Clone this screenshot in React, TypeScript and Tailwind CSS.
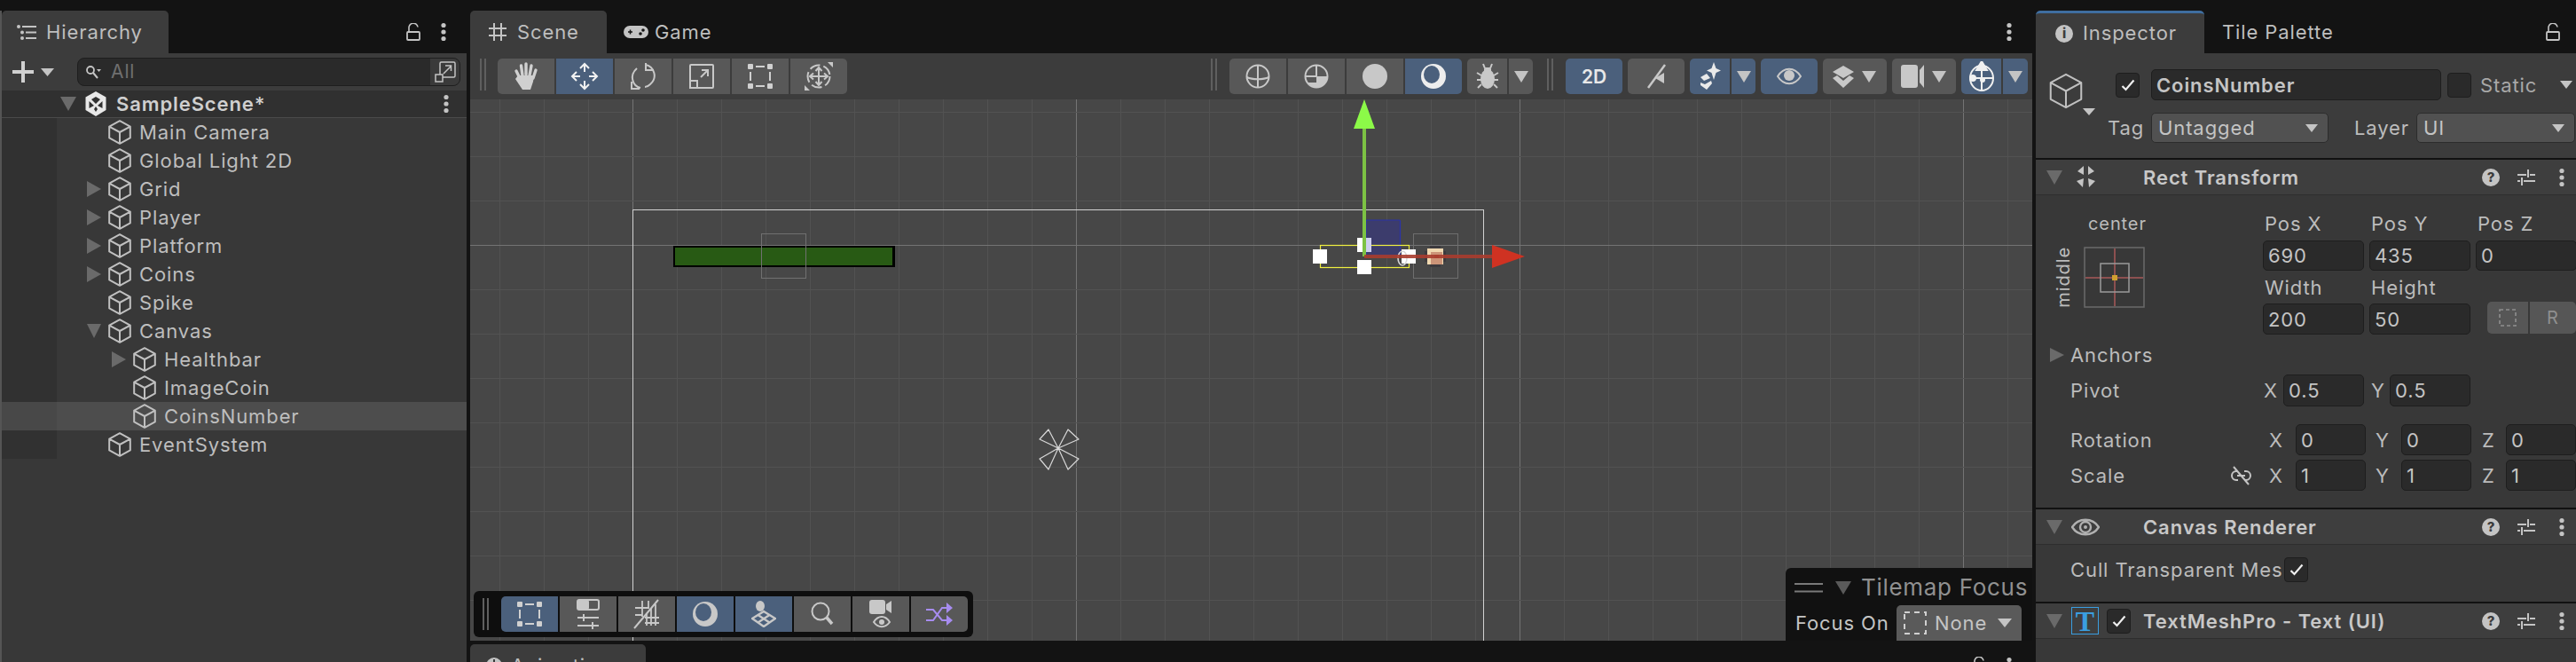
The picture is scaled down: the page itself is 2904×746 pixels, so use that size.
import type { ReactNode } from "react";

function Svg({ w, h, vb, children }: { w: number; h: number; vb?: string; children: ReactNode }) {
  return (
    <svg width={w} height={h} viewBox={vb ?? `0 0 ${w} ${h}`} fill="none" className="shrink-0">
      {children}
    </svg>
  );
}

function Cube({ w = 26, h = 28 }: { w?: number; h?: number }) {
  return (
    <Svg w={w} h={h} vb="0 0 26 28">
      <path d="M13 1.2 24.8 7.6V20.4L13 26.8 1.2 20.4V7.6Z M1.2 7.6 13 14 24.8 7.6 M13 14V26.8" stroke="#c0c0c0" strokeWidth={w > 30 ? 1.4 : 2} strokeLinejoin="round" />
    </Svg>
  );
}

function Tri({ w = 16, h = 16, dir = "right", color = "#6a6a6a" }: { w?: number; h?: number; dir?: "right" | "down"; color?: string }) {
  const pts = dir === "right" ? `0,0 ${w},${h / 2} 0,${h}` : `0,0 ${w},0 ${w / 2},${h}`;
  return (
    <Svg w={w} h={h}>
      <polygon points={pts} fill={color} />
    </Svg>
  );
}

function Caret({ w = 14, h = 8 }: { w?: number; h?: number }) {
  return <Tri w={w} h={h} dir="down" color="#c4c4c4" />;
}

function Kebab() {
  return (
    <Svg w={6} h={22}>
      <circle cx="3" cy="3.5" r="2.6" fill="#c4c4c4" />
      <circle cx="3" cy="11" r="2.6" fill="#c4c4c4" />
      <circle cx="3" cy="18.5" r="2.6" fill="#c4c4c4" />
    </Svg>
  );
}

function Lock() {
  return (
    <Svg w={16} h={20}>
      <path d="M3 9V6a5 5 0 0 1 10-1.5" stroke="#c4c4c4" strokeWidth="1.6" />
      <rect x="1" y="10" width="14" height="9" rx="1" stroke="#c4c4c4" strokeWidth="1.8" />
    </Svg>
  );
}

function CheckBox({ checked = true }: { checked?: boolean }) {
  return (
    <div className="w-[27px] h-[28px] shrink-0 rounded-[4px] bg-[#2a2a2a] border border-[#1e1e1e] flex items-center justify-center">
      {checked && (
        <Svg w={16} h={14}>
          <path d="M1.5 8 5.5 12 14.5 1.5" stroke="#efefef" strokeWidth="2.2" />
        </Svg>
      )}
    </div>
  );
}

function HeaderTools() {
  return (
    <div className="ml-auto mr-[13px] flex items-center">
      <div className="w-[20px] h-[20px] rounded-full bg-[#c4c4c4] flex items-center justify-center text-[15px] font-extrabold text-[#3c3c3c] leading-none tracking-normal">?</div>
      <div className="ml-[20px]">
        <Svg w={20} h={20}>
          <path d="M0 7H10 M14 7H20 M12 1V10 M0 14H3 M7 14H20 M5 10V19" stroke="#c4c4c4" strokeWidth="2" />
        </Svg>
      </div>
      <div className="ml-[27px]">
        <Kebab />
      </div>
    </div>
  );
}

function ComponentHeader({ children, title }: { children: ReactNode; title: string }) {
  return (
    <div className="h-[40px] shrink-0 bg-[#3e3e3e] border-b border-[#2e2e2e] flex items-center pl-[12px]">
      <Tri w={18} h={16} dir="down" />
      <div className="w-[91px] shrink-0 flex items-center">{children}</div>
      <span className="text-[22px] font-semibold text-[#c8c8c8] whitespace-nowrap leading-none">{title}</span>
      <HeaderTools />
    </div>
  );
}

function Field({ value, w, h = "h-[35px]", bold }: { value: string; w: string; h?: string; bold?: boolean }) {
  return (
    <div className={`${w} ${h} shrink-0 rounded-[5px] bg-[#2a2a2a] border border-[#1e1e1e] flex items-center pl-[5px] text-[22px] text-[#c4c4c4] leading-none ${bold ? "font-semibold" : ""}`}>
      {value}
    </div>
  );
}

function Label({ children, w }: { children: ReactNode; w: string }) {
  return <span className={`${w} shrink-0 text-[22px] text-[#bcbcbc] whitespace-nowrap leading-none`}>{children}</span>;
}

function Dropdown({ value, w }: { value: string; w: string }) {
  return (
    <div className={`${w} h-[34px] shrink-0 rounded-[5px] bg-[#515151] border border-[#2c2c2c] flex items-center justify-between pl-[7px] pr-[11px] text-[22px] text-[#c4c4c4] leading-none`}>
      <span>{value}</span>
      <Caret w={14} h={9} />
    </div>
  );
}

function TreeRow({ name, depth, arrow, selected }: { name: string; depth: number; arrow?: "right" | "down"; selected?: boolean }) {
  return (
    <div className={`h-[32px] flex items-center ${selected ? "bg-[#4d4d4d]" : ""}`}>
      <div className={`w-[62px] h-full shrink-0 ${selected ? "bg-[#484848]" : "bg-[#313131]"}`} />
      <div className={`flex items-center ${depth === 1 ? "pl-[34px]" : "pl-[62px]"}`}>
        <div className="w-[24px] flex items-center">{arrow && <Tri w={16} h={arrow === "right" ? 18 : 16} dir={arrow} />}</div>
        <Cube />
        <span className="ml-[9px] text-[22px] text-[#bebebe] whitespace-nowrap leading-none">{name}</span>
      </div>
    </div>
  );
}

function Hierarchy() {
  return (
    <div className="w-[524px] shrink-0 flex flex-col pt-[12px]">
      <div className="h-[48px] flex items-center justify-between shrink-0">
        <div className="w-[188px] h-full bg-[#3c3c3c] rounded-t-[5px] flex items-center pl-[17px]">
          <Svg w={22} h={17}>
            <circle cx="2" cy="2" r="2" fill="#c4c4c4" />
            <circle cx="6" cy="8.5" r="2" fill="#c4c4c4" />
            <circle cx="6" cy="15" r="2" fill="#c4c4c4" />
            <path d="M6 2H22 M10 8.5H22 M10 15H22" stroke="#c4c4c4" strokeWidth="2" />
          </Svg>
          <span className="ml-[11px] text-[22px] text-[#bebebe]">Hierarchy</span>
        </div>
        <div className="flex items-center pr-[23px]">
          <Lock />
          <div className="ml-[23px]">
            <Kebab />
          </div>
        </div>
      </div>
      <div className="h-[42px] shrink-0 bg-[#3c3c3c] flex items-center pl-[12px]">
        <Svg w={24} h={24}>
          <path d="M12 0V24 M0 12H24" stroke="#d0d0d0" strokeWidth="4" />
        </Svg>
        <div className="ml-[8px]">
          <Caret w={15} h={9} />
        </div>
        <div className="ml-[26px] w-[432px] h-[32px] rounded-[8px] bg-[#2a2a2a] border border-[#1e1e1e] flex items-center pl-[8px] overflow-hidden">
          <Svg w={18} h={18}>
            <circle cx="6" cy="7" r="4" stroke="#c4c4c4" strokeWidth="1.8" />
            <path d="M9 10 14 16" stroke="#c4c4c4" strokeWidth="2" />
            <path d="M13 6H18L15.5 9Z" fill="#c4c4c4" />
          </Svg>
          <span className="ml-[11px] text-[21px] text-[#6f6f6f] flex-1">All</span>
          <div className="w-[33px] h-full bg-[#3a3a3a] flex items-center justify-center">
            <Svg w={24} h={24}>
              <rect x="6" y="1" width="17" height="17" rx="1.5" stroke="#c4c4c4" strokeWidth="1.5" />
              <rect x="1" y="15" width="8" height="8" fill="#3a3a3a" stroke="#c4c4c4" strokeWidth="1.5" />
              <path d="M10 14 18 6 M12 5H18.5V11" stroke="#c4c4c4" strokeWidth="1.5" />
            </Svg>
          </div>
        </div>
      </div>
      <div className="h-[31px] shrink-0 bg-[#303030] border-b border-[#4a4a4a] flex items-center">
        <div className="ml-[66px]">
          <Tri w={18} h={16} dir="down" />
        </div>
        <div className="ml-[10px]">
          <Svg w={24} h={28}>
            <path d="M12 0 23.5 6.5V21L12 28 .5 21V6.5Z" fill="#e8e8e8" />
            <path d="M12 6 7 9 12 14 17 9Z M4.5 11V19L10 16Z M19.5 11V19L14 16Z M12 17 10 20 12 23 14 20Z" fill="#303030" />
          </Svg>
        </div>
        <span className="ml-[11px] text-[22px] font-semibold text-[#cfcfcf] flex-1 leading-none">SampleScene*</span>
        <div className="mr-[20px]">
          <Kebab />
        </div>
      </div>
      <div className="flex-1 bg-[#383838] flex flex-col">
        <TreeRow name="Main Camera" depth={1} />
        <TreeRow name="Global Light 2D" depth={1} />
        <TreeRow name="Grid" depth={1} arrow="right" />
        <TreeRow name="Player" depth={1} arrow="right" />
        <TreeRow name="Platform" depth={1} arrow="right" />
        <TreeRow name="Coins" depth={1} arrow="right" />
        <TreeRow name="Spike" depth={1} />
        <TreeRow name="Canvas" depth={1} arrow="down" />
        <TreeRow name="Healthbar" depth={2} arrow="right" />
        <TreeRow name="ImageCoin" depth={2} />
        <TreeRow name="CoinsNumber" depth={2} selected />
        <TreeRow name="EventSystem" depth={1} />
      </div>
    </div>
  );
}

function Handle({ className }: { className?: string }) {
  return (
    <div className={`flex gap-[3px] h-[36px] ${className ?? ""}`}>
      <div className="w-[2px] h-full bg-[#5f5f5f]" />
      <div className="w-[2px] h-full bg-[#5f5f5f]" />
    </div>
  );
}

function Btn({ children, w, active, round }: { children?: ReactNode; w: string; active?: boolean; round?: string }) {
  return <div className={`${w} h-[40px] shrink-0 flex items-center justify-center ${active ? "bg-[#4b607c]" : "bg-[#585858]"} ${round ?? ""}`}>{children}</div>;
}

const s = { stroke: "#c8c8c8", strokeWidth: 2 };

function RectIcon() {
  return (
    <Svg w={28} h={28}>
      <rect x="0" y="0" width="6" height="6" rx="1" fill="#d0d0d0" />
      <rect x="22" y="0" width="6" height="6" rx="1" fill="#d0d0d0" />
      <rect x="0" y="22" width="6" height="6" rx="1" fill="#d0d0d0" />
      <rect x="22" y="22" width="6" height="6" rx="1" fill="#d0d0d0" />
      <path d="M9 3H19 M9 25H19 M3 9V19 M25 9V19" stroke="#d0d0d0" strokeWidth="2" />
    </Svg>
  );
}

function MainToolbar() {
  return (
    <div className="h-[52px] shrink-0 bg-[#3c3c3c] flex items-start pt-[6px]">
      <Handle className="ml-[11px] mr-[13px]" />
      <div className="flex gap-[2px]">
        <Btn w="w-[64px]" round="rounded-l-[5px]">
          <Svg w={30} h={32}>
            <path d="M8 18 4 10 M11 15 9.5 4 M15 14V2 M19 15 21 4 M23 18 26 9" stroke="#d0d0d0" strokeWidth="3.4" strokeLinecap="round" />
            <path d="M6 15H24L23 22 20 31H11L3 19Z" fill="#d0d0d0" />
          </Svg>
        </Btn>
        <Btn w="w-[64px]" active>
          <Svg w={32} h={32}>
            <path d="M16 2V11 M16 21V30 M2 16H11 M21 16H30 M11 7 16 2 21 7 M11 25 16 30 21 25 M7 11 2 16 7 21 M25 11 30 16 25 21" stroke="#f2f2f2" strokeWidth="2" />
          </Svg>
        </Btn>
        <Btn w="w-[64px]">
          <Svg w={30} h={32}>
            <path d="M12 29C3 27-1 15 8 7" {...s} />
            <path d="M18 3C27 5 32 17 23 25 21 27 19 28 17 28" {...s} />
            <path d="M2 22V30H11 M18 1V9H27" {...s} />
          </Svg>
        </Btn>
        <Btn w="w-[64px]">
          <Svg w={28} h={28}>
            <rect x="1" y="1" width="26" height="26" rx="1" {...s} />
            <rect x="1" y="19" width="8" height="8" {...s} />
            <path d="M13 15 21 7 M14 7H21V14" {...s} />
          </Svg>
        </Btn>
        <Btn w="w-[64px]"><RectIcon /></Btn>
        <Btn w="w-[64px]" round="rounded-r-[5px]">
          <Svg w={32} h={32}>
            <circle cx="16" cy="16" r="12.5" stroke="#c8c8c8" strokeWidth="2" strokeDasharray="12 4" />
            <path d="M16 6V26 M6 16H26 M12.5 10 16 6 19.5 10 M12.5 22 16 26 19.5 22 M10 12.5 6 16 10 19.5 M22 12.5 26 16 22 19.5" {...s} />
            <path d="M26 0H32V6Z M0 32V26L6 32Z" fill="#c8c8c8" />
          </Svg>
        </Btn>
      </div>

      <Handle className="ml-[410px] mr-[14px]" />
      <div className="flex gap-[2px]">
        <Btn w="w-[64px]" round="rounded-l-[5px]">
          <Svg w={28} h={28}>
            <circle cx="14" cy="14" r="12.5" {...s} />
            <path d="M14 1.5V26.5 M1.5 15C8 18 20 18 26.5 15" {...s} />
          </Svg>
        </Btn>
        <Btn w="w-[64px]">
          <Svg w={28} h={28}>
            <circle cx="14" cy="14" r="12.5" {...s} />
            <path d="M1.5 14H14V1.5" {...s} />
            <path d="M14 14H26.5C26.5 21 21 26.5 14 26.5 10 26.5 6.5 25 4 21L14 21Z" fill="#c8c8c8" />
          </Svg>
        </Btn>
        <Btn w="w-[64px]">
          <div className="w-[28px] h-[28px] rounded-full bg-[#c8c8c8]" />
        </Btn>
        <Btn w="w-[64px]" active round="rounded-r-[5px]">
          <Svg w={28} h={28}>
            <circle cx="14" cy="14" r="14" fill="#ededed" />
            <ellipse cx="12" cy="12" rx="9" ry="10" fill="#4b607c" />
          </Svg>
        </Btn>
      </div>
      <div className="ml-[6px] flex gap-[2px]">
        <Btn w="w-[45px]" round="rounded-l-[5px]">
          <Svg w={26} h={30}>
            <ellipse cx="13" cy="18" rx="8" ry="11" fill="#c8c8c8" />
            <path d="M8 1 10 6 M18 1 16 6 M1 11 6 14 M25 11 20 14 M1 19H6 M25 19H20 M2 28 6 24 M24 28 20 24" stroke="#c8c8c8" strokeWidth="2" />
            <rect x="9" y="5" width="8" height="6" rx="2" fill="#c8c8c8" />
          </Svg>
        </Btn>
        <Btn w="w-[27px]" round="rounded-r-[5px]"><Caret w={16} h={13} /></Btn>
      </div>

      <Handle className="ml-[16px] mr-[14px]" />
      <Btn w="w-[64px]" active round="rounded-[5px]">
        <span className="text-[21px] font-semibold text-[#e8e8e8] leading-none tracking-normal">2D</span>
      </Btn>
      <Btn w="w-[64px] ml-[6px]" round="rounded-[5px]">
        <Svg w={22} h={28}>
          <path d="M21 1 2 27" stroke="#c8c8c8" strokeWidth="2.5" />
          <path d="M20 10V22L10 16Z" fill="#c8c8c8" />
        </Svg>
      </Btn>
      <div className="ml-[6px] flex gap-[2px]">
        <Btn w="w-[45px]" active round="rounded-l-[5px]">
          <Svg w={24} h={32}>
            <path d="M16 0 18.5 7 24 9.500 18.5 12 16 20 13.5 12 8 9.500 13.5 7Z" fill="#eaeaea" />
            <path d="M1 17 8 13 12 18 5 21Z M1 23 6 25 13 21 14 24 8 31 1 26Z" fill="#eaeaea" />
          </Svg>
        </Btn>
        <Btn w="w-[27px]" active round="rounded-r-[5px]"><Caret w={16} h={13} /></Btn>
      </div>
      <Btn w="w-[64px] ml-[6px]" active round="rounded-[5px]">
        <Svg w={28} h={24}>
          <path d="M1 12C8 1 20 1 27 12 20 23 8 23 1 12Z" stroke="#c8c8c8" strokeWidth="2" />
          <circle cx="14" cy="11" r="6" fill="#c8c8c8" />
        </Svg>
      </Btn>
      <div className="ml-[6px] w-[72px] h-[40px] rounded-[5px] bg-[#585858] flex items-center pl-[11px] gap-[9px]">
        <Svg w={24} h={28}>
          <path d="M12 2 24 9 12 16 0 9Z" fill="#c8c8c8" />
          <path d="M0 16 5 13 12 19 19 13 24 16 12 27Z" fill="#c8c8c8" />
        </Svg>
        <Caret w={16} h={13} />
      </div>
      <div className="ml-[6px] w-[72px] h-[40px] rounded-[5px] bg-[#585858] flex items-center pl-[10px] gap-[9px]">
        <Svg w={26} h={28}>
          <rect x="0" y="1" width="19" height="26" rx="3" fill="#c8c8c8" />
          <path d="M21 7 26 1V27L21 21Z" fill="#c8c8c8" />
        </Svg>
        <Caret w={16} h={13} />
      </div>
      <div className="ml-[6px] flex gap-[2px]">
        <Btn w="w-[45px]" active round="rounded-l-[5px]">
          <Svg w={30} h={34}>
            <ellipse cx="15" cy="19" rx="13" ry="14" stroke="#f0f0f0" strokeWidth="2" />
            <path d="M15 0 21 10H9Z M2 19H28 M15 5V33" stroke="#f0f0f0" strokeWidth="2" fill="#f0f0f0" />
            <circle cx="5" cy="19" r="4" fill="#f0f0f0" />
            <circle cx="16" cy="21" r="3" fill="#f0f0f0" />
          </Svg>
        </Btn>
        <Btn w="w-[28px]" active round="rounded-r-[5px]"><Caret w={16} h={13} /></Btn>
      </div>
    </div>
  );
}

function SceneDrawing() {
  const vertical = Array.from({ length: 35 }, (_, i) => 563 + i * 50);
  const horizontal = Array.from({ length: 12 }, (_, i) => 126 + i * 50);
  return (
    <svg className="absolute inset-0" width={1761} height={610} viewBox="530 112 1761 610" fill="none">
      <g shapeRendering="crispEdges">
        {vertical.map((x) => (
          <line key={x} x1={x + 0.5} y1={112} x2={x + 0.5} y2={722} stroke={(x - 213) % 500 === 0 ? "#747474" : "#525252"} />
        ))}
        {horizontal.map((y) => (
          <line key={y} x1={530} y1={y + 0.5} x2={2291} y2={y + 0.5} stroke={y === 276 ? "#747474" : "#525252"} />
        ))}
        <rect x="713.5" y="236.5" width="959" height="600" stroke="#d2d2d2" />

        <rect x="759" y="277" width="250" height="24" fill="#000" />
        <rect x="761" y="279" width="245" height="20" fill="#285a14" />
        <rect x="858.5" y="263.5" width="50" height="50" stroke="#707070" />
        <rect x="1593.5" y="263.5" width="50" height="50" stroke="#6e6e6e" />
      </g>

      <path d="M1193 505 1182 484 1172 495Z M1193 505 1204 484 1216 495Z M1193 505 1172 517 1182 529Z M1193 505 1216 517 1204 529Z" stroke="#d8d8d8" strokeWidth="1.2" strokeLinejoin="round" />

      <rect x="1540" y="248" width="38.5" height="40" rx="1" fill="#3c3c6c" stroke="#2b33a8" strokeWidth="1.2" />
      <rect x="1488.5" y="276.5" width="100" height="25" stroke="#f0f040" strokeWidth="1.2" />
      <rect x="1530" y="268" width="16" height="16" fill="#ffffff" />
      <rect x="1540" y="268" width="6" height="16" fill="#cfd0f0" />
      <rect x="1480" y="281" width="16" height="16" fill="#ffffff" />
      <rect x="1530" y="293" width="16" height="16" fill="#ffffff" />
      <rect x="1580" y="281" width="16" height="16" fill="#ffffff" />
      <ellipse cx="1581" cy="291" rx="5" ry="8" stroke="#d8d8d8" strokeWidth="1.6" />

      <g shapeRendering="crispEdges">
        <rect x="1610" y="281" width="16" height="16" fill="#3c3a3e" />
        <rect x="1612" y="277" width="12" height="24" fill="#3c3a3e" />
        <rect x="1606" y="283" width="24" height="12" fill="#3c3a3e" />
        <rect x="1609" y="280" width="18" height="18" fill="#f0d8b0" />
        <rect x="1613" y="284" width="13" height="14" fill="#cc9478" />
        <rect x="1617" y="287" width="5" height="4" fill="#a8644c" />
      </g>

      <rect x="1536" y="145" width="4" height="144" fill="#7dc244" />
      <polygon points="1538,112 1550,145 1526,145" fill="#8cfa48" />
      <rect x="1538" y="287" width="146" height="4" fill="#a83c2e" fillOpacity="0.9" />
      <polygon points="1682,276 1719,289 1682,302" fill="#cf3222" />
    </svg>
  );
}

function OverlayToolbar() {
  return (
    <div className="absolute left-[4px] top-[554px] w-[563px] h-[52px] bg-[#0e0e0e] rounded-[6px] flex items-center pl-[10px]">
      <Handle className="mr-[14px]" />
      <div className="flex gap-[2px]">
        <Btn w="w-[64px]" active round="rounded-l-[5px]"><RectIcon /></Btn>
        <Btn w="w-[64px]">
          <Svg w={26} h={34}>
            <rect x="1" y="1" width="24" height="11" rx="2" stroke="#c8c8c8" strokeWidth="2" />
            <rect x="1" y="1" width="13" height="11" rx="2" fill="#c8c8c8" />
            <path d="M1 21H25 M1 30H25 M8 17V25 M18 26V34" stroke="#c8c8c8" strokeWidth="2" />
          </Svg>
        </Btn>
        <Btn w="w-[64px]">
          <Svg w={30} h={34}>
            <path d="M1 33 28 1" stroke="#c8c8c8" strokeWidth="2" />
            <path d="M2 10H18 M2 18H10 M10 2V20 M17 2V10 M15 17V30 M20 11V30 M25 6V30 M13 21H29 M13 27H29" stroke="#c8c8c8" strokeWidth="1.8" />
          </Svg>
        </Btn>
        <Btn w="w-[64px]" active>
          <Svg w={28} h={28}>
            <circle cx="14" cy="14" r="14" fill="#c8c8c8" />
            <ellipse cx="12" cy="12" rx="9" ry="10" fill="#4b607c" />
          </Svg>
        </Btn>
        <Btn w="w-[64px]" active>
          <Svg w={28} h={30}>
            <ellipse cx="10" cy="6" rx="5" ry="6" fill="#c8c8c8" />
            <path d="M14 12 27 20 14 29 1 20Z M7.5 16 20.5 24.5 M20.5 16 7.5 24.5" stroke="#c8c8c8" strokeWidth="2.4" />
          </Svg>
        </Btn>
        <Btn w="w-[64px]">
          <Svg w={26} h={28}>
            <circle cx="11" cy="11" r="9.5" stroke="#c8c8c8" strokeWidth="2" />
            <path d="M18 18 24 25" stroke="#c8c8c8" strokeWidth="3.5" />
          </Svg>
        </Btn>
        <Btn w="w-[64px]">
          <Svg w={26} h={32}>
            <rect x="0" y="0" width="18" height="16" rx="3" fill="#c8c8c8" />
            <path d="M19 5 25 1V15L19 11Z" fill="#c8c8c8" />
            <path d="M5 25C10 17 18 17 23 25 18 32 10 32 5 25Z" stroke="#c8c8c8" strokeWidth="2" />
            <circle cx="14" cy="25" r="3" fill="#c8c8c8" />
          </Svg>
        </Btn>
        <Btn w="w-[64px]" round="rounded-r-[5px]">
          <Svg w={30} h={26}>
            <path d="M0 8H8L18 20H25 M0 20H8L18 6H25" stroke="#a78cf0" strokeWidth="2" />
            <path d="M23 0 30 6 23 12Z M23 14 30 20 23 26Z" fill="#a78cf0" />
          </Svg>
        </Btn>
      </div>
    </div>
  );
}

function TilemapFocus() {
  return (
    <div className="absolute right-0 bottom-0 w-[278px] h-[82px] bg-[#111111] rounded-tl-[6px] pl-[10px] overflow-hidden">
      <div className="h-[42px] flex items-center pt-[2px]">
        <Svg w={32} h={11}>
          <path d="M0 1H32 M0 9.5H32" stroke="#7a7a7a" strokeWidth="2" />
        </Svg>
        <div className="ml-[14px]">
          <Tri w={18} h={15} dir="down" color="#5a5a5a" />
        </div>
        <span className="ml-[11px] text-[26px] text-[#909090] whitespace-nowrap leading-none tracking-[0.7px]">Tilemap Focus</span>
      </div>
      <div className="flex items-center">
        <span className="w-[114px] ml-[1px] text-[22px] text-[#c4c4c4] whitespace-nowrap">Focus On</span>
        <div className="w-[141px] h-[40px] bg-[#5a5a5a] rounded-t-[5px] flex items-center pl-[8px]">
          <Svg w={26} h={26}>
            <rect x="1" y="1" width="24" height="24" stroke="#d0d0d0" strokeWidth="2" strokeDasharray="6 5" />
          </Svg>
          <span className="ml-[9px] text-[22px] text-[#c4c4c4] leading-none">None</span>
          <div className="ml-[12px]">
            <Caret w={16} h={10} />
          </div>
        </div>
      </div>
    </div>
  );
}

function ScenePanel() {
  return (
    <div className="w-[1761px] ml-[4px] shrink-0 flex flex-col pt-[12px]">
      <div className="h-[48px] shrink-0 flex items-center">
        <div className="w-[154px] h-full bg-[#3c3c3c] rounded-t-[5px] flex items-center pl-[20px]">
          <Svg w={22} h={22}>
            <path d="M7 1V21 M15 1V21 M1 7H21 M1 15H21" stroke="#c4c4c4" strokeWidth="2" />
          </Svg>
          <span className="ml-[11px] text-[22px] text-[#bebebe]">Scene</span>
        </div>
        <div className="ml-[19px] flex items-center">
          <Svg w={28} h={14}>
            <rect x="0" y="0" width="28" height="14" rx="7" fill="#c4c4c4" />
            <path d="M5 7H10 M7.5 4.5V9.5" stroke="#131313" strokeWidth="1.5" />
            <circle cx="19" cy="9" r="1.8" fill="#131313" />
            <circle cx="22" cy="5" r="1.8" fill="#131313" />
          </Svg>
          <span className="ml-[7px] text-[22px] text-[#bebebe]">Game</span>
        </div>
        <div className="ml-auto mr-[23px]">
          <Kebab />
        </div>
      </div>
      <MainToolbar />
      <div className="relative w-[1761px] h-[610px] shrink-0 bg-[#474747] overflow-hidden">
        <SceneDrawing />
        <OverlayToolbar />
        <TilemapFocus />
      </div>
      <div className="flex-1 pt-[4px] flex items-start overflow-hidden">
        <div className="w-[198px] h-[48px] bg-[#3c3c3c] rounded-t-[5px] flex items-center pl-[18px] shrink-0">
          <Svg w={18} h={18}>
            <circle cx="9" cy="9" r="9" fill="#c4c4c4" />
            <path d="M9 2V9" stroke="#3c3c3c" strokeWidth="2" />
          </Svg>
          <span className="ml-[10px] text-[22px] text-[#bebebe]">Animation</span>
        </div>
        <div className="ml-auto mr-[23px] mt-[14px] flex items-start">
          <Lock />
          <div className="ml-[23px]">
            <Kebab />
          </div>
        </div>
      </div>
    </div>
  );
}

function AxisRow({ label, link, x, y, z, mt }: { label: string; link?: boolean; x: string; y: string; z: string; mt: string }) {
  return (
    <div className={`h-[35px] ${mt} flex items-center pl-[39px]`}>
      <Label w="w-[181px]">{label}</Label>
      <div className="w-[43px] shrink-0">
        {link && (
          <Svg w={23} h={22}>
            <path d="M8 6H6a5 5 0 0 0 0 10h2 M15 6h2a5 5 0 0 1 0 10h-2 M7 11H16" stroke="#c4c4c4" strokeWidth="2" />
            <path d="M3 1 20 21" stroke="#c4c4c4" strokeWidth="2" />
          </Svg>
        )}
      </div>
      <Label w="w-[30px]">X</Label>
      <Field value={x} w="w-[79px]" />
      <Label w="w-[29px] ml-[11px]">Y</Label>
      <Field value={y} w="w-[79px]" />
      <Label w="w-[27px] ml-[12px]">Z</Label>
      <Field value={z} w="w-[79px]" />
    </div>
  );
}

function RectTransform() {
  return (
    <div className="h-[354px] shrink-0 flex flex-col border-b-2 border-[#111111]">
      <div className="flex">
        <div className="w-[256px] shrink-0 pt-[20px]">
          <div className="h-[24px] pl-[59px] flex items-center text-[20px] text-[#bcbcbc] leading-none">center</div>
          <div className="mt-[14px] flex items-center pl-[21px]">
            <span className="w-[16px] text-[20px] text-[#bcbcbc] leading-none [writing-mode:vertical-rl] rotate-180">middle</span>
            <div className="ml-[17px]">
              <Svg w={69} h={69}>
                <rect x="1" y="1" width="67" height="67" stroke="#6a6a6a" strokeWidth="1.5" />
                <path d="M2 35H67 M35 2V67" stroke="#a85858" strokeWidth="1.5" />
                <rect x="19" y="19" width="32" height="32" stroke="#9a9a9a" strokeWidth="1.5" />
                <rect x="32" y="32" width="6" height="6" fill="#d0a030" />
              </Svg>
            </div>
          </div>
        </div>
        <div className="flex-1 pt-[20px]">
          <div className="h-[24px] flex gap-[6px] items-center">
            <Label w="w-[114px] pl-[2px]">Pos X</Label>
            <Label w="w-[114px] pl-[2px]">Pos Y</Label>
            <Label w="w-[114px] pl-[2px]">Pos Z</Label>
          </div>
          <div className="mt-[7px] flex gap-[6px]">
            <Field value="690" w="w-[114px]" h="h-[34px]" />
            <Field value="435" w="w-[114px]" h="h-[34px]" />
            <Field value="0" w="w-[114px]" h="h-[34px]" />
          </div>
          <div className="h-[37px] flex gap-[6px] items-center">
            <Label w="w-[114px] pl-[2px]">Width</Label>
            <Label w="w-[114px] pl-[2px]">Height</Label>
          </div>
          <div className="flex items-start">
            <Field value="200" w="w-[114px]" />
            <Field value="50" w="w-[114px] ml-[6px]" />
            <div className="ml-[19px] -mt-[2px] flex gap-[2px]">
              <div className="w-[46px] h-[36px] bg-[#565656] rounded-l-[5px] flex items-center justify-center">
                <Svg w={20} h={20}>
                  <rect x="1" y="1" width="18" height="18" stroke="#8f8f8f" strokeWidth="1.6" strokeDasharray="4 3" />
                </Svg>
              </div>
              <div className="w-[52px] h-[36px] bg-[#565656] rounded-r-[5px] flex items-center justify-center text-[20px] text-[#8f8f8f] leading-none">R</div>
            </div>
          </div>
        </div>
      </div>
      <div className="h-[40px] mt-[3px] flex items-center pl-[16px]">
        <Tri w={16} h={16} />
        <span className="ml-[7px] text-[22px] text-[#bcbcbc] leading-none">Anchors</span>
      </div>
      <div className="h-[36px] mt-[2px] flex items-center pl-[39px]">
        <Label w="w-[218px]">Pivot</Label>
        <Label w="w-[22px]">X</Label>
        <Field value="0.5" w="w-[91px]" h="h-[36px]" />
        <Label w="w-[21px] ml-[8px]">Y</Label>
        <Field value="0.5" w="w-[91px]" h="h-[36px]" />
      </div>
      <AxisRow label="Rotation" x="0" y="0" z="0" mt="mt-[20px]" />
      <AxisRow label="Scale" link x="1" y="1" z="1" mt="mt-[5px]" />
    </div>
  );
}

function Inspector() {
  return (
    <div className="w-[609px] ml-[4px] shrink-0 flex flex-col pt-[12px] overflow-hidden">
      <div className="h-[48px] shrink-0 flex items-center">
        <div className="w-[190px] h-full bg-[#3c3c3c] border-t-[3px] border-[#3f6ea0] rounded-t-[5px] flex items-center pl-[22px]">
          <div className="w-[20px] h-[20px] rounded-full bg-[#c4c4c4] flex items-center justify-center text-[15px] font-extrabold text-[#3c3c3c] leading-none tracking-normal">i</div>
          <span className="ml-[11px] text-[22px] text-[#bebebe]">Inspector</span>
        </div>
        <span className="ml-[20px] text-[22px] text-[#bebebe]">Tile Palette</span>
        <div className="ml-auto mr-[18px]">
          <Lock />
        </div>
      </div>

      <div className="flex-1 bg-[#383838] flex flex-col">
        <div className="h-[120px] shrink-0 bg-[#3c3c3c] flex border-b-2 border-[#111111]">
          <div className="w-[80px] shrink-0 pt-[22px] pl-[15px]">
            <Cube w={38} h={41} />
            <div className="ml-[38px] -mt-[1px]">
              <Caret w={14} h={8} />
            </div>
          </div>
          <div className="flex-1 pt-[18px]">
            <div className="h-[35px] flex items-center pl-[10px]">
              <CheckBox />
              <Field value="CoinsNumber" w="w-[327px] ml-[13px]" bold />
              <div className="ml-[7px]">
                <CheckBox checked={false} />
              </div>
              <span className="ml-[10px] w-[90px] shrink-0 text-[22px] text-[#a8a8a8] leading-none">Static</span>
              <Caret w={14} h={9} />
            </div>
            <div className="h-[34px] mt-[14px] flex items-center pl-[1px]">
              <Label w="w-[49px]">Tag</Label>
              <Dropdown value="Untagged" w="w-[200px]" />
              <Label w="w-[70px] ml-[29px]">Layer</Label>
              <Dropdown value="UI" w="w-[179px]" />
            </div>
          </div>
        </div>

        <ComponentHeader title="Rect Transform">
          <div className="pl-[14px]">
            <Svg w={25} h={25}>
              <path d="M10 0 3 6 10 10Z M15 0 22 6 15 10Z M2 17 10 14 9 24Z M23 17 15 14 16 24Z" fill="#c4c4c4" />
            </Svg>
          </div>
        </ComponentHeader>
        <RectTransform />

        <ComponentHeader title="Canvas Renderer">
          <div className="pl-[10px]">
            <Svg w={32} h={24}>
              <path d="M1 12C8 1 24 1 31 12 24 23 8 23 1 12Z" stroke="#b0b0b0" strokeWidth="2.4" />
              <circle cx="16" cy="12" r="6" stroke="#b0b0b0" strokeWidth="2.4" />
              <circle cx="16" cy="12" r="2" fill="#b0b0b0" />
            </Svg>
          </div>
        </ComponentHeader>
        <div className="h-[66px] shrink-0 border-b-2 border-[#111111] pt-[14px] pl-[39px] flex items-start">
          <div className="w-[241px] h-[28px] shrink-0 whitespace-nowrap flex items-center text-[22px] text-[#bcbcbc] leading-none">Cull Transparent Mes</div>
          <CheckBox />
        </div>

        <ComponentHeader title="TextMeshPro - Text (UI)">
          <div className="pl-[10px] flex items-center">
            <div className="w-[31px] h-[31px] shrink-0 border border-[#3a9ee0] flex items-center justify-center font-['Liberation_Serif',serif] font-bold text-[32px] text-[#3a9ee0] leading-none tracking-normal">T</div>
            <div className="ml-[9px]">
              <CheckBox />
            </div>
          </div>
        </ComponentHeader>
      </div>
    </div>
  );
}

export default function App() {
  return (
    <div className="w-[2904px] h-[746px] bg-[#131313] flex overflow-hidden tracking-[0.9px] font-['Inter','Liberation_Sans',sans-serif]">
      <div className="w-[2px] mt-[12px] shrink-0 bg-[#555555]" />
      <Hierarchy />
      <ScenePanel />
      <Inspector />
    </div>
  );
}
